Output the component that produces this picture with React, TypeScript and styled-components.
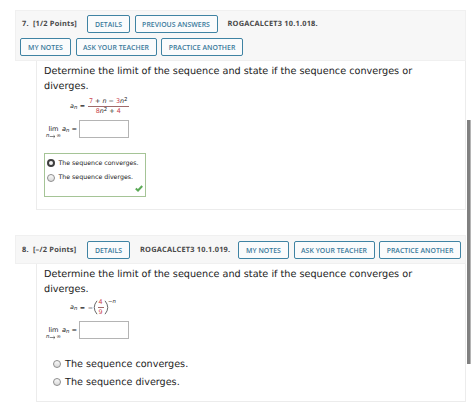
import React from "react";
import styled, { createGlobalStyle } from "styled-components";

const GlobalStyle = createGlobalStyle`
  * { box-sizing: border-box; }
  body { margin: 0; background: #fff; color: #222; font-family: "DejaVu Sans", Verdana, sans-serif; text-rendering: geometricPrecision; }
`;

const Page = styled.main`
  position: relative;
  width: 474px;
  height: 409px;
  padding: 10px 0 0 15px;
  overflow: hidden;
`;

const Question = styled.section<{ $height: number }>`
  display: flex;
  flex-direction: column;
  width: 451px;
  height: ${(p) => p.$height}px;
  margin-bottom: 25px;
`;

const Header = styled.header<{ $height: number; $top: number }>`
  display: flex;
  flex-direction: column;
  gap: 5px;
  flex: none;
  height: ${(p) => p.$height}px;
  padding: ${(p) => p.$top}px 0 0 4px;
  background: #f7f7f7;
  border: 1px solid #f0f0f0;
`;

const HeaderRow = styled.div`
  display: flex;
  align-items: center;
  height: 18px;
  gap: 4.5px;
`;

const Label = styled.span<{ $width: number; $indent: number }>`
  flex: none;
  width: ${(p) => p.$width}px;
  padding-left: ${(p) => p.$indent}px;
  font: 700 7.4px/19px "Open Sans", sans-serif;
  letter-spacing: 0.2px;
  color: #484848;
  white-space: pre;
`;

const Button = styled.button<{ $width: number }>`
  flex: none;
  width: ${(p) => p.$width}px;
  height: 18px;
  padding: 0;
  border: 1px solid #3f83a3;
  border-radius: 2px;
  background: #fafbfc;
  color: #39799b;
  font: 600 6.9px/17px "Open Sans", sans-serif;
  letter-spacing: 0.03px;
  white-space: nowrap;
`;

const Body = styled.div`
  flex: 1;
  margin-left: 21px;
  padding: 4px 0 0 7px;
  border: solid #ececec;
  border-width: 0 1px 1px;
`;

const Prompt = styled.p`
  margin: 0;
  font-size: 9.68px;
  line-height: 14.5px;
  white-space: nowrap;
`;

const Formula = styled.div<{ $height: number; $after: number }>`
  display: flex;
  align-items: center;
  height: ${(p) => p.$height}px;
  margin-bottom: ${(p) => p.$after}px;
  padding-left: 26px;
  font-size: 6.4px;
  white-space: pre;
`;

const Fraction = styled.span<{ $width: number }>`
  display: flex;
  flex-direction: column;
  align-items: center;
  width: ${(p) => p.$width}px;
  line-height: 9px;
`;

const Numerator = styled.span`
  align-self: stretch;
  text-align: center;
  border-bottom: 1px solid #a06a6a;
`;

const Red = styled.span`
  color: #c9434d;
`;

const Sup = styled.span<{ $rise: number }>`
  display: inline-block;
  font-size: 5.4px;
  line-height: 1;
  transform: translateY(-${(p) => p.$rise}px);
`;

const Sub = styled.span`
  display: inline-block;
  font-size: 5.4px;
  line-height: 1;
  font-style: italic;
  transform: translateY(1.2px);
`;

const Equals = styled.span`
  margin: 0 2.5px;
`;

const Paren = styled.span`
  flex: none;
  width: 4.5px;
  height: 15px;
  svg { display: block; }
`;

const LimitRow = styled.div`
  display: flex;
  height: 18px;
  margin-left: 1px;
  font-size: 6.6px;
  line-height: 8px;
  white-space: pre;
`;

const Limit = styled.span`
  display: flex;
  flex-direction: column;
  width: 17px;
  padding-top: 5px;
  text-align: center;
`;

const Approach = styled.span`
  display: flex;
  align-items: center;
  justify-content: center;
  height: 6px;
  font-size: 5.4px;
  line-height: 6px;
`;

const Term = styled.span`
  width: 17px;
  padding-top: 5px;
`;

const Answer = styled.input`
  width: 50px;
  height: 18px;
  padding: 0;
  border: 1px solid #b4b4b4;
  border-radius: 0;
  background: #fff;
`;

const Graded = styled.div`
  display: flex;
  flex-direction: column;
  align-items: flex-start;
  width: 102px;
  height: 44px;
  margin-top: 15px;
  padding: 2px 2px 0;
  border: 1px solid #a5c496;
`;

const Choices = styled.div`
  padding: 16px 0 0 8.5px;
`;

const Option = styled.label<{ $large?: boolean }>`
  display: flex;
  align-items: center;
  gap: ${(p) => (p.$large ? 4.5 : 3.5)}px;
  height: ${(p) => (p.$large ? 18 : 14.5)}px;
  font-size: ${(p) => (p.$large ? 9.65 : 6.25)}px;
  white-space: nowrap;
`;

const Dot = styled.span<{ $on?: boolean }>`
  flex: none;
  width: 8px;
  height: 8px;
  border-radius: 50%;
  border: ${(p) => (p.$on ? "2px solid #3e3e3e" : "1px solid #8d8d8d")};
  background: ${(p) => (p.$on ? "#f2f2f2" : "linear-gradient(#fafafa, #d9d9d9)")};
`;

const Check = styled.svg`
  margin: 0 0 0 auto;
`;

const Scrollbar = styled.div`
  position: absolute;
  left: 467px;
  top: 120px;
  width: 4px;
  height: 244px;
  background: #808080;
  border-right: 1px solid #b5b5b5;
`;

const Sequence = () => (
  <span><i>a</i><Sub>n</Sub></span>
);

const LimitField = () => (
  <LimitRow>
    <Limit>
      <span>lim</span>
      <Approach>
        <i>n</i>
        <svg width="7" height="5" viewBox="0 0 7 5" fill="none" stroke="#555" strokeWidth=".7">
          <path d="M.7 2.5H6M4.5 1.2 6 2.5 4.5 3.8" />
        </svg>
        ∞
      </Approach>
    </Limit>
    <Term><Sequence /> =</Term>
    <Answer aria-label="Limit" />
  </LimitRow>
);

const Parenthesis = ({ right }: { right?: boolean }) => (
  <Paren>
    <svg width="5" height="15" viewBox="0 0 5 15" fill="none" stroke="#444" strokeWidth=".8">
      <path d={right ? "M1 .8Q6.5 7.5 1 14.2" : "M4 .8Q-1.5 7.5 4 14.2"} />
    </svg>
  </Paren>
);

const Statement = () => (
  <Prompt>
    Determine the limit of the sequence and state if the sequence converges or
    <br />
    diverges.
  </Prompt>
);

export default function App() {
  return (
    <Page>
      <GlobalStyle />
      <Question $height={200}>
        <Header $height={51} $top={4}>
          <HeaderRow>
            <Label $width={62.5} $indent={2}>{"7.  [1/2 Points]"}</Label>
            <Button $width={43}>DETAILS</Button>
            <Button $width={83}>PREVIOUS ANSWERS</Button>
            <Label $width={98} $indent={5.5}>ROGACALCET3 10.1.018.</Label>
          </HeaderRow>
          <HeaderRow>
            <Button $width={51}>MY NOTES</Button>
            <Button $width={81}>ASK YOUR TEACHER</Button>
            <Button $width={82}>PRACTICE ANOTHER</Button>
          </HeaderRow>
        </Header>
        <Body>
          <Statement />
          <Formula $height={24} $after={2}>
            <Sequence /><Equals>=</Equals>
            <Fraction $width={41}>
              <Numerator><Red>7</Red> + <i>n</i> − <Red>3</Red><i>n</i><Sup $rise={2.5}>2</Sup></Numerator>
              <span><Red>8</Red><i>n</i><Sup $rise={2.5}>2</Sup> + <Red>4</Red></span>
            </Fraction>
          </Formula>
          <LimitField />
          <Graded>
            <Option><Dot $on />The sequence converges.</Option>
            <Option><Dot />The sequence diverges.</Option>
            <Check width="8" height="7" viewBox="0 0 8 7" fill="none" stroke="#5caa57" strokeWidth="2">
              <path d="M.8 3.5 3 5.5 7.2 1" />
            </Check>
          </Graded>
        </Body>
      </Question>
      <Question $height={167}>
        <Header $height={29} $top={5}>
          <HeaderRow>
            <Label $width={62.5} $indent={2}>{"8.  [–/2 Points]"}</Label>
            <Button $width={43}>DETAILS</Button>
            <Label $width={99} $indent={5.5}>ROGACALCET3 10.1.019.</Label>
            <Button $width={51}>MY NOTES</Button>
            <Button $width={81}>ASK YOUR TEACHER</Button>
            <Button $width={82}>PRACTICE ANOTHER</Button>
          </HeaderRow>
        </Header>
        <Body>
          <Statement />
          <Formula $height={21} $after={3}>
            <Sequence /><Equals>=</Equals>−
            <Parenthesis />
            <Fraction $width={6}>
              <Numerator><Red>4</Red></Numerator>
              <Red>9</Red>
            </Fraction>
            <Parenthesis right />
            <Sup $rise={5}>−<i>n</i></Sup>
          </Formula>
          <LimitField />
          <Choices>
            <Option $large><Dot />The sequence converges.</Option>
            <Option $large><Dot />The sequence diverges.</Option>
          </Choices>
        </Body>
      </Question>
      <Scrollbar />
    </Page>
  );
}
